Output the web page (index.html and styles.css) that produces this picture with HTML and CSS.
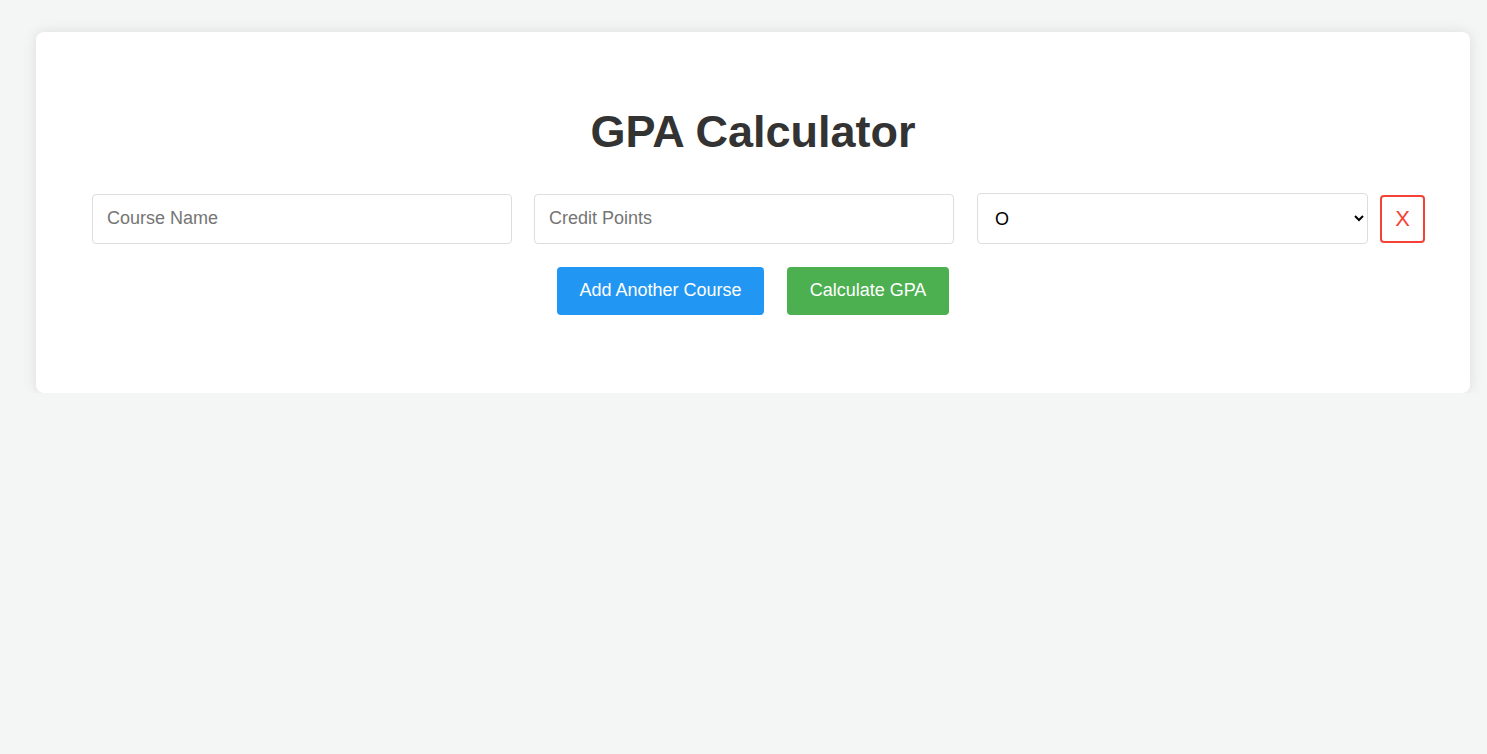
FILE: index.html
```html
<!DOCTYPE html>
<html lang="en">
<head>
<meta charset="utf-8">
<title>GPA Calculator</title>
<link rel="stylesheet" href="styles.css">
</head>
<body>
  <div class="card">
    <h1 class="title">GPA Calculator</h1>
    <div class="course-row">
      <input class="field field-name" type="text" placeholder="Course Name">
      <input class="field field-credit" type="text" placeholder="Credit Points">
      <select class="grade">
        <option>O</option>
        <option>A+</option>
        <option>A</option>
        <option>B+</option>
        <option>B</option>
        <option>C</option>
        <option>P</option>
        <option>F</option>
      </select>
      <button class="remove" type="button">X</button>
    </div>
    <div class="actions">
      <button class="btn btn-add" type="button">Add Another Course</button>
      <button class="btn btn-calc" type="button">Calculate GPA</button>
    </div>
  </div>
</body>
</html>
```

FILE: styles.css
```css
html, body {
  margin: 0;
  padding: 0;
}

body {
  background: #f4f5f5;
  font-family: "Liberation Sans", Arial, sans-serif;
  padding: 32px 17px 0 36px;
}

.card {
  background: #ffffff;
  border-radius: 8px;
  box-shadow: 0 0 14px rgba(0, 0, 0, 0.1);
  padding: 75px 56px 79px 56px;
  height: 361px;
  box-sizing: border-box;
}

.title {
  margin: 0;
  text-align: center;
  font-size: 45px;
  line-height: 50px;
  font-weight: bold;
  color: #333333;
}

.course-row {
  display: flex;
  align-items: center;
  margin-top: 36px;
  margin-right: -11px;
  height: 51px;
}

.field {
  box-sizing: border-box;
  height: 50px;
  width: 420px;
  border: 1px solid #dddddd;
  border-radius: 4px;
  padding: 0 14px;
  font-family: "Liberation Sans", Arial, sans-serif;
  font-size: 18px;
  color: #333333;
  outline: none;
}

.field::placeholder {
  color: #757575;
}

.field-credit {
  margin-left: 22px;
}

.grade {
  box-sizing: border-box;
  margin-left: 23px;
  width: 391px;
  height: 51px;
  border: 1px solid #dddddd;
  border-radius: 4px;
  background: #ffffff;
  padding: 0 10px 0 13px;
  font-family: "Liberation Sans", Arial, sans-serif;
  font-size: 18px;
  color: #000000;
}

.remove {
  box-sizing: border-box;
  margin-left: 12px;
  width: 45px;
  height: 48px;
  border: 2px solid #f44336;
  border-radius: 4px;
  background: #ffffff;
  color: #f44336;
  font-family: "Liberation Sans", Arial, sans-serif;
  font-size: 22px;
  padding: 0;
}

.actions {
  display: flex;
  justify-content: center;
  gap: 23px;
  margin-top: 23px;
}

.btn {
  box-sizing: border-box;
  height: 48px;
  border: none;
  border-radius: 4px;
  padding: 0 0 2px;
  color: #ffffff;
  font-family: "Liberation Sans", Arial, sans-serif;
  font-size: 18px;
}

.btn-add {
  background: #2196f3;
  width: 207px;
}

.btn-calc {
  background: #4caf50;
  width: 162px;
}
```
